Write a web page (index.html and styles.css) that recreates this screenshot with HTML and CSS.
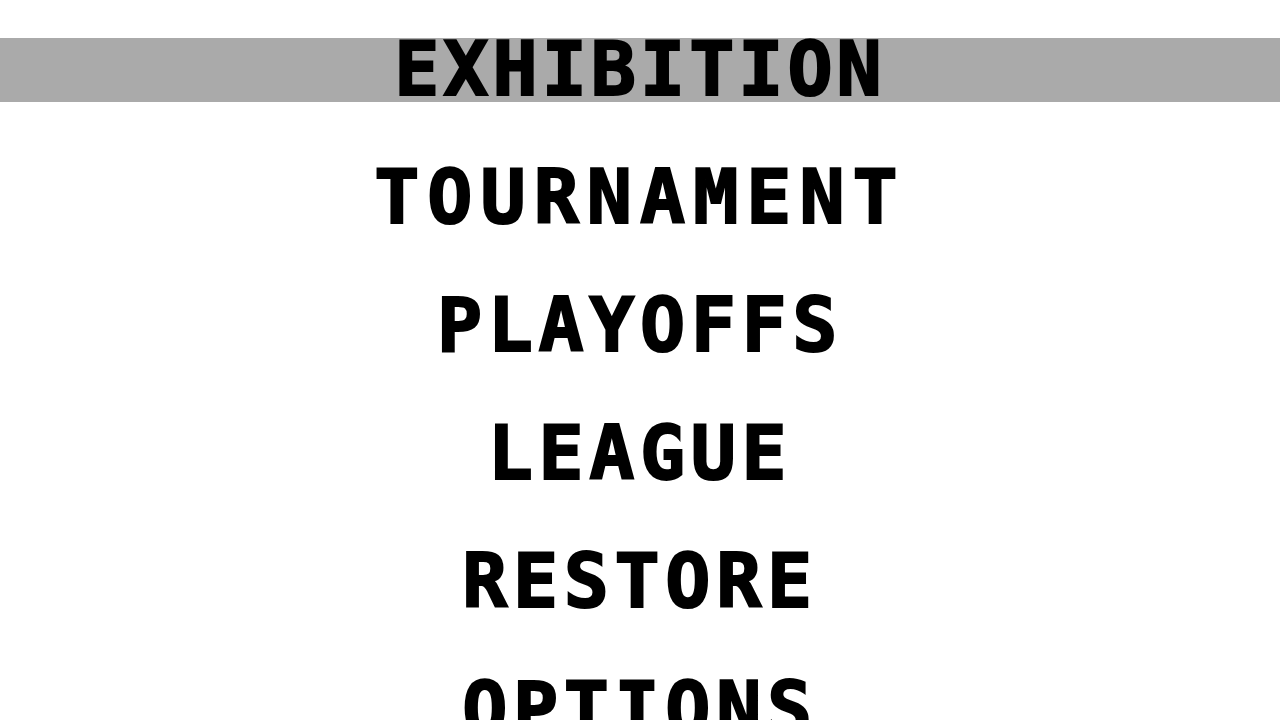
FILE: index.html
```html
<!DOCTYPE html>
<html lang="en">
<head>
<meta charset="utf-8">
<title>Main Menu</title>
<link rel="stylesheet" href="styles.css">
</head>
<body>
<main class="menu">
  <ul class="menu-list">
    <li class="menu-item menu-item--narrow is-selected">EXHIBITION</li>
    <li class="menu-item menu-item--wide">TOURNAMENT</li>
    <li class="menu-item">PLAYOFFS</li>
    <li class="menu-item">LEAGUE</li>
    <li class="menu-item">RESTORE</li>
    <li class="menu-item">OPTIONS</li>
  </ul>
</main>
</body>
</html>
```
FILE: styles.css
```css
html, body {
  margin: 0;
  padding: 0;
  background: #ffffff;
}

.menu {
  width: 1280px;
  height: 720px;
  overflow: hidden;
}

.menu-list {
  list-style: none;
  margin: 0;
  padding: 38px 0 0;
  display: flex;
  flex-direction: column;
  gap: 64px;
}

/* Chunky bitmap-style menu label */
.menu-item {
  height: 64px;
  line-height: 62px;
  text-align: center;
  font-family: "DejaVu Sans Mono", "Liberation Mono", monospace;
  font-weight: bold;
  font-size: 75px;
  letter-spacing: 5.6px;
  color: #000000;
  -webkit-text-stroke: 2px #000000;
  white-space: nowrap;
}

.menu-item--narrow {
  letter-spacing: 4px;
}

.menu-item--wide {
  letter-spacing: 8px;
}

.menu-item.is-selected {
  background: #aaaaaa;
}
```
